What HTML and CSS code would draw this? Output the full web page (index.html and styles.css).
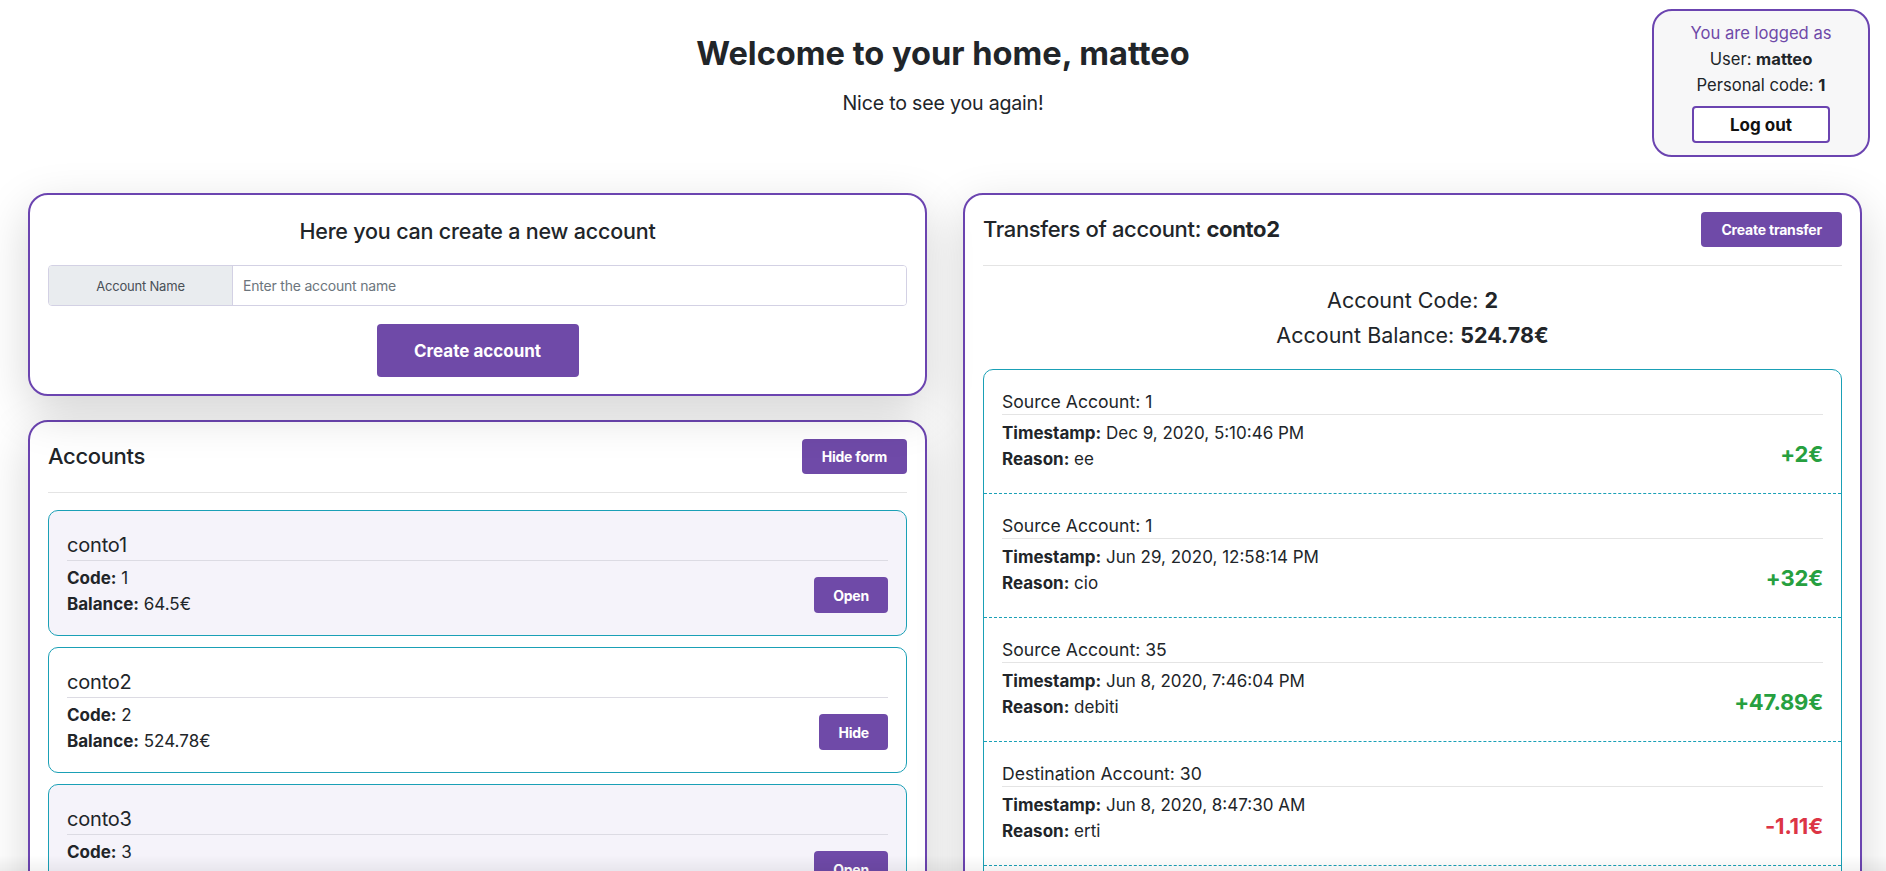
FILE: index.html
```html
<!DOCTYPE html>
<html lang="en">
<head>
<meta charset="utf-8">
<title>Home</title>
<link rel="stylesheet" href="styles.css">
</head>
<body>
<header class="top">
  <div class="top-side"></div>
  <div class="welcome">
    <h1 class="welcome-title">Welcome to your home, matteo</h1>
    <p class="welcome-sub">Nice to see you again!</p>
  </div>
  <div class="top-side top-right">
    <div class="login-box">
      <div class="login-label">You are logged as</div>
      <div class="login-line">User: <b>matteo</b></div>
      <div class="login-line">Personal code: <b>1</b></div>
      <button class="btn-logout" type="button">Log out</button>
    </div>
  </div>
</header>

<main class="columns">
  <div class="col">
    <section class="card card-create">
      <h2 class="create-title">Here you can create a new account</h2>
      <div class="input-group">
        <span class="input-addon">Account Name</span>
        <input class="input-field" type="text" placeholder="Enter the account name">
      </div>
      <button class="btn btn-lg" type="button">Create account</button>
    </section>

    <section class="card card-accounts">
      <div class="card-head">
        <h3 class="card-title">Accounts</h3>
        <button class="btn btn-sm" type="button">Hide form</button>
      </div>
      <div class="acc">
        <div class="acc-name">conto1</div>
        <div class="acc-body">
          <div>
            <div class="acc-line"><b>Code:</b> 1</div>
            <div class="acc-line"><b>Balance:</b> 64.5€</div>
          </div>
          <button class="btn btn-item" type="button">Open</button>
        </div>
      </div>
      <div class="acc acc-selected">
        <div class="acc-name">conto2</div>
        <div class="acc-body">
          <div>
            <div class="acc-line"><b>Code:</b> 2</div>
            <div class="acc-line"><b>Balance:</b> 524.78€</div>
          </div>
          <button class="btn btn-item" type="button">Hide</button>
        </div>
      </div>
      <div class="acc">
        <div class="acc-name">conto3</div>
        <div class="acc-body">
          <div>
            <div class="acc-line"><b>Code:</b> 3</div>
            <div class="acc-line"><b>Balance:</b> 0€</div>
          </div>
          <button class="btn btn-item" type="button">Open</button>
        </div>
      </div>
    </section>
  </div>

  <div class="col">
    <section class="card card-transfers">
      <div class="card-head">
        <h3 class="card-title">Transfers of account: <b>conto2</b></h3>
        <button class="btn btn-sm" type="button">Create transfer</button>
      </div>
      <div class="acct-info">
        <div>Account Code: <b>2</b></div>
        <div>Account Balance: <b>524.78€</b></div>
      </div>
      <div class="transfers">
        <div class="tr">
          <div class="tr-src">Source Account: 1</div>
          <div class="tr-body">
            <div>
              <div class="tr-line"><b>Timestamp:</b> Dec 9, 2020, 5:10:46 PM</div>
              <div class="tr-line"><b>Reason:</b> ee</div>
            </div>
            <div class="amount plus">+2€</div>
          </div>
        </div>
        <div class="tr">
          <div class="tr-src">Source Account: 1</div>
          <div class="tr-body">
            <div>
              <div class="tr-line"><b>Timestamp:</b> Jun 29, 2020, 12:58:14 PM</div>
              <div class="tr-line"><b>Reason:</b> cio</div>
            </div>
            <div class="amount plus">+32€</div>
          </div>
        </div>
        <div class="tr">
          <div class="tr-src">Source Account: 35</div>
          <div class="tr-body">
            <div>
              <div class="tr-line"><b>Timestamp:</b> Jun 8, 2020, 7:46:04 PM</div>
              <div class="tr-line"><b>Reason:</b> debiti</div>
            </div>
            <div class="amount plus">+47.89€</div>
          </div>
        </div>
        <div class="tr">
          <div class="tr-src">Destination Account: 30</div>
          <div class="tr-body">
            <div>
              <div class="tr-line"><b>Timestamp:</b> Jun 8, 2020, 8:47:30 AM</div>
              <div class="tr-line"><b>Reason:</b> erti</div>
            </div>
            <div class="amount minus">-1.11€</div>
          </div>
        </div>
        <div class="tr">
          <div class="tr-src">Source Account: 2</div>
          <div class="tr-body">
            <div>
              <div class="tr-line"><b>Timestamp:</b> Jun 2, 2020, 10:12:05 AM</div>
              <div class="tr-line"><b>Reason:</b> prova</div>
            </div>
            <div class="amount plus">+10€</div>
          </div>
        </div>
      </div>
    </section>
  </div>
</main>
<div class="fade-bottom"></div>
</body>
</html>
```

FILE: styles.css
```css
* { box-sizing: border-box; }
html, body { margin: 0; padding: 0; height: 100%; overflow: hidden; }
body {
  font-family: Inter, "Noto Sans", "Liberation Sans", sans-serif;
  font-size: 17px;
  color: #212529;
  background: #fff;
}
b { font-weight: 700; }
h1, h2, h3, p { margin: 0; }

/* header */
.top {
  display: grid;
  grid-template-columns: 1fr auto 1fr;
  padding-top: 9px;
}
.welcome { text-align: center; }
.welcome-title {
  margin-top: 25px;
  font-size: 32.6px;
  line-height: 38px;
  font-weight: 700;
}
.welcome-sub {
  margin-top: 16px;
  font-size: 19.6px;
  line-height: 30px;
  letter-spacing: -0.2px;
}
.top-right { display: flex; justify-content: flex-end; align-items: flex-start; }
.login-box {
  width: 218px;
  margin-right: 16px;
  border: 2px solid #6b44b0;
  border-radius: 20px;
  background: #f7f7f8;
  padding: 9px 0 12px;
  text-align: center;
  font-size: 16.6px;
  line-height: 26px;
}
.login-label { color: #6f4aa8; }
.btn-logout {
  display: block;
  margin: 8px auto 0;
  width: 138px;
  height: 37px;
  border: 2px solid #6b44b0;
  border-radius: 4px;
  background: #fff;
  color: #111;
  font-family: inherit;
  font-size: 17px;
  font-weight: 700;
}

/* columns */
.columns {
  display: flex;
  align-items: flex-start;
  gap: 36px;
  padding: 0 24px 0 28px;
  margin-top: 36px;
}
.col {
  flex: 1 1 0;
  min-width: 0;
  display: flex;
  flex-direction: column;
  gap: 24px;
}

.card {
  border: 2px solid #6b44b0;
  border-radius: 20px;
  padding: 17px 18px;
  box-shadow: 0 1rem 3rem rgba(0, 0, 0, 0.17);
}
.card-create { position: relative; z-index: 1; background: #fff; }
.card-transfers { background: #fff; }

.create-title {
  text-align: center;
  font-size: 21.5px;
  line-height: 38px;
  font-weight: 500;
  letter-spacing: -0.2px;
  margin-bottom: 15px;
}
.input-group {
  display: flex;
  height: 41px;
  border: 1px solid #d3d1e4;
  border-radius: 4px;
  overflow: hidden;
}
.input-addon {
  width: 184px;
  flex: none;
  display: flex;
  align-items: center;
  justify-content: center;
  background: #e9ecef;
  border-right: 1px solid #d3d1e4;
  font-size: 13px;
  letter-spacing: -0.2px;
  color: #495057;
}
.input-field {
  flex: 1;
  border: none;
  outline: none;
  padding: 0 10px;
  font-family: inherit;
  font-size: 14px;
  letter-spacing: -0.2px;
  color: #495057;
  background: #fff;
}
.input-field::placeholder { color: #6c757d; }

.btn {
  border: none;
  border-radius: 4px;
  background: #6f4aa8;
  color: #fff;
  font-family: inherit;
  font-weight: 700;
  cursor: pointer;
}
.btn-lg {
  display: block;
  margin: 18px auto 0;
  width: 202px;
  height: 53px;
  font-size: 17px;
}
.btn-sm {
  height: 35px;
  padding: 0 20px;
  font-size: 14px;
  letter-spacing: -0.2px;
}
.btn-item {
  height: 36px;
  padding: 0 19px;
  font-size: 14px;
  letter-spacing: -0.2px;
  margin-bottom: 4px;
}

.card-head {
  display: flex;
  align-items: center;
  justify-content: space-between;
  box-sizing: content-box;
  height: 35px;
  padding-bottom: 18px;
  border-bottom: 1px solid #e4e4e4;
  margin-bottom: 17px;
}
.card-title {
  font-size: 22px;
  font-weight: 500;
  line-height: 35px;
  letter-spacing: -0.35px;
}

/* accounts */
.acc {
  border: 1px solid #1aa0b6;
  border-radius: 10px;
  padding: 22px 18px 18px;
  background: #f5f3fa;
}
.acc + .acc { margin-top: 11px; }
.acc-selected { background: #fff; }
.acc-name {
  font-size: 20px;
  line-height: 24px;
  letter-spacing: -0.2px;
  padding-bottom: 3px;
  border-bottom: 1px solid #dcdbe3;
}
.acc-body {
  display: flex;
  align-items: flex-end;
  justify-content: space-between;
  margin-top: 4px;
}
.acc-line { line-height: 26px; }

/* transfers */
.acct-info {
  text-align: center;
  font-size: 21.5px;
  line-height: 35px;
  margin-bottom: 16px;
}
.transfers {
  border: 1px solid #1aa0b6;
  border-radius: 10px;
}
.tr {
  padding: 20px 18px 21px;
  border-bottom: 1px dashed #1aa0b6;
}
.tr-src {
  font-size: 17.6px;
  line-height: 24px;
  border-bottom: 1px solid #e4e4e4;
}
.tr-body {
  display: flex;
  justify-content: space-between;
  align-items: flex-end;
  margin-top: 5px;
}
.tr-line { line-height: 26px; }
.amount {
  font-size: 22px;
  font-weight: 700;
  line-height: 36px;
  letter-spacing: -0.2px;
}
.plus { color: #27a03f; }
.minus { color: #dc3545; }

.fade-bottom {
  position: fixed;
  left: 0;
  right: 0;
  bottom: 0;
  height: 16px;
  background: linear-gradient(to bottom, rgba(0,0,0,0), rgba(0,0,0,0.05));
  pointer-events: none;
  z-index: 5;
}
```
